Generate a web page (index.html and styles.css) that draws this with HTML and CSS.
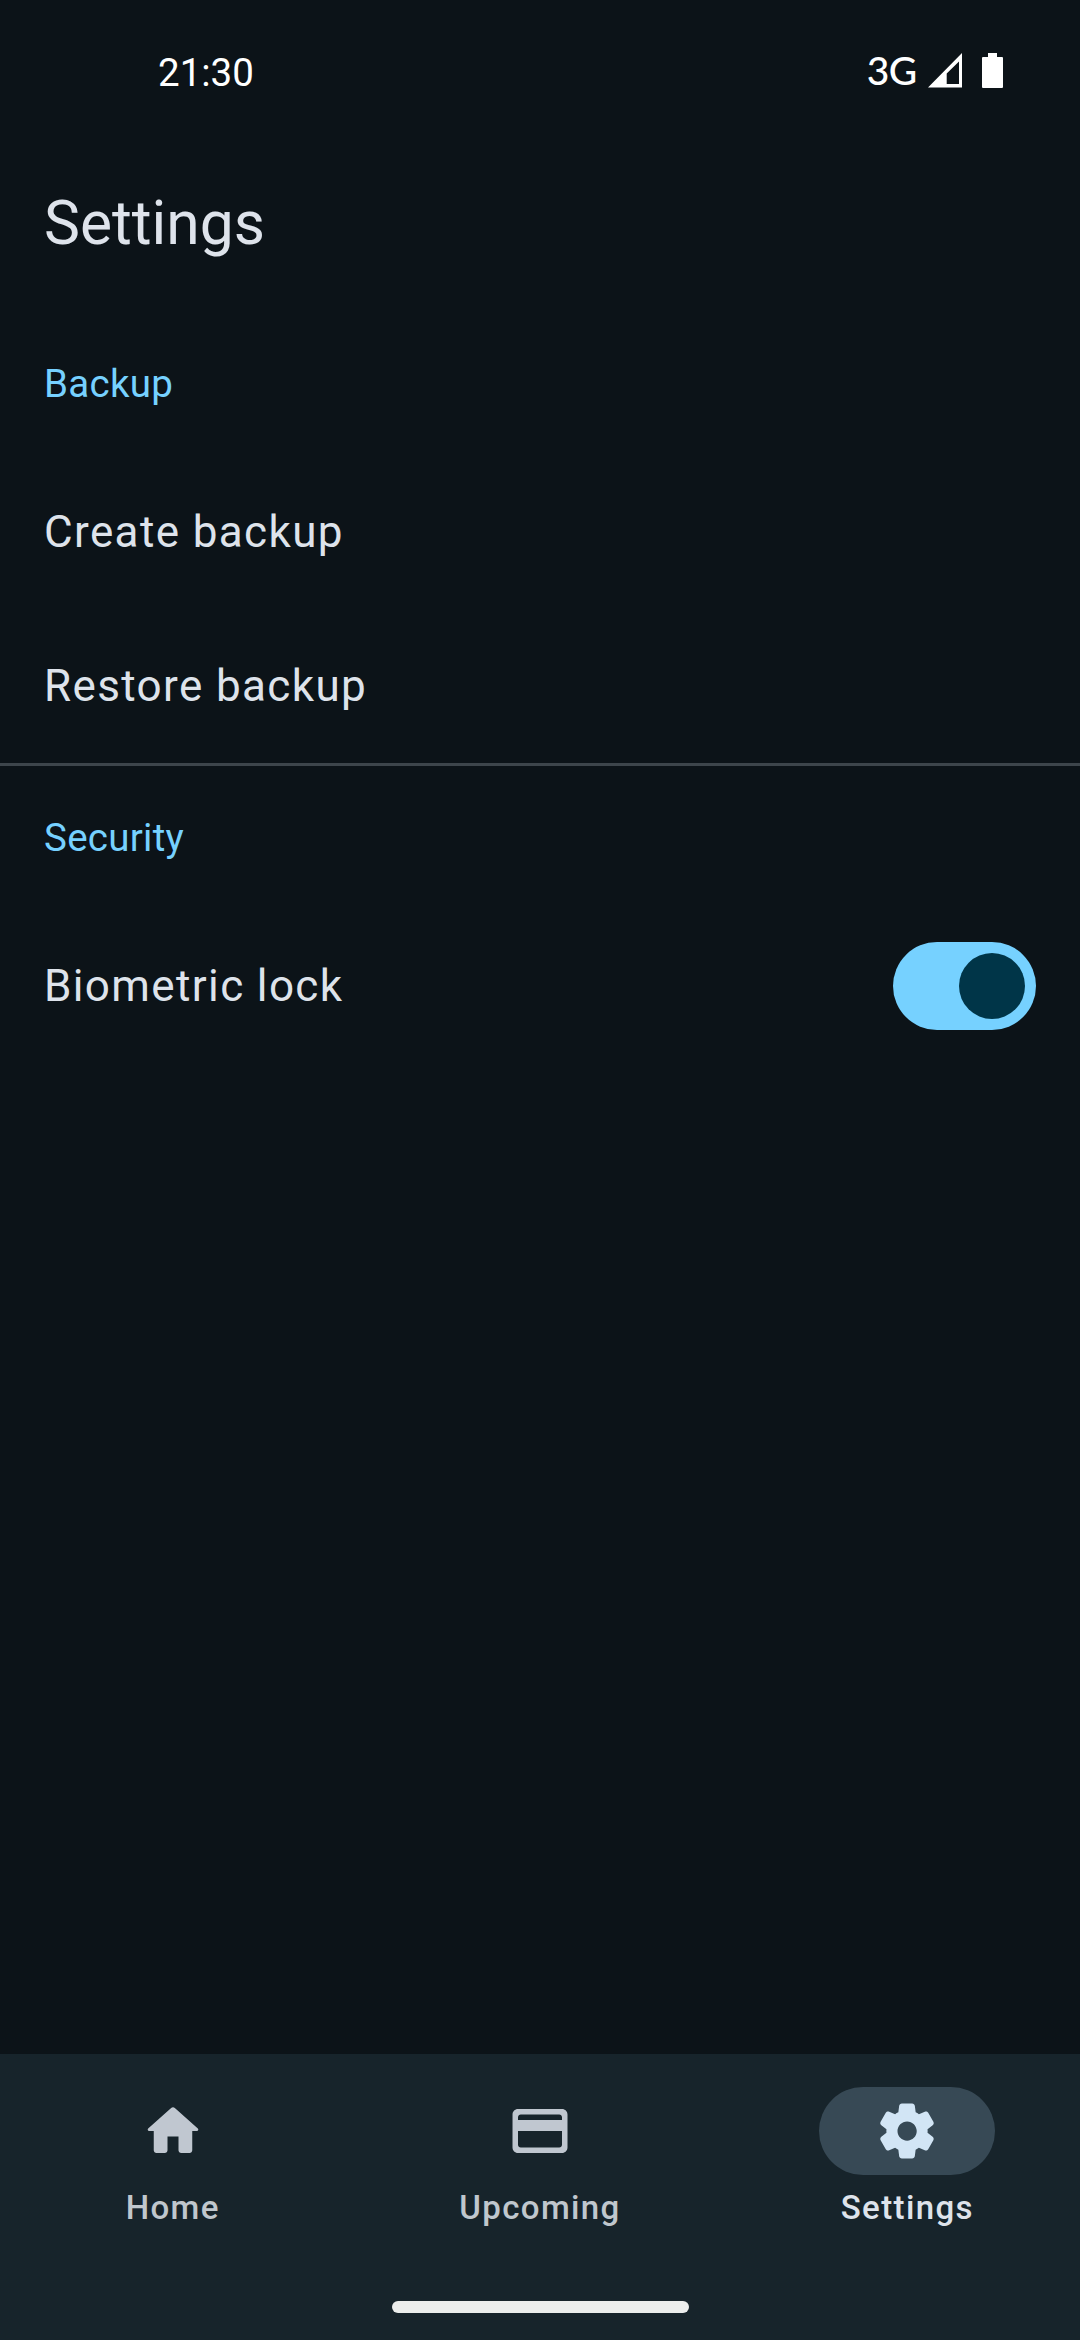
FILE: index.html
```html
<!DOCTYPE html>
<html lang="en">
<head>
<meta charset="utf-8">
<title>Settings</title>
<link rel="stylesheet" href="styles.css">
</head>
<body>
<div class="screen">
  <div class="status-bar">
    <span class="clock">21:30</span>
    <div class="status-icons">
      <span class="network">3G</span>
      <svg class="signal" width="34" height="35" viewBox="0 0 34 35"><path fill="#fff" fill-rule="evenodd" d="M34 0V34.5H0ZM31 8.5L18.7 20.5V31H31Z"/></svg>
      <svg class="battery" width="21" height="35" viewBox="0 0 21 35"><path fill="#fff" d="M6 0H15V4H20Q21 4 21 5V34Q21 35 20 35H1Q0 35 0 34V5Q0 4 1 4H6Z"/></svg>
    </div>
  </div>
  <header class="top-bar"><h1 class="title">Settings</h1></header>
  <main class="content">
    <section class="group group-divided">
      <h2 class="group-title">Backup</h2>
      <div class="row"><span class="row-label">Create backup</span></div>
      <div class="row"><span class="row-label">Restore backup</span></div>
    </section>
    <section class="group">
      <h2 class="group-title">Security</h2>
      <div class="row">
        <span class="row-label">Biometric lock</span>
        <div class="switch" role="switch" aria-checked="true"><div class="thumb"></div></div>
      </div>
    </section>
  </main>
  <nav class="nav">
    <div class="nav-items">
      <div class="nav-item">
        <div class="pill"><svg class="icon" viewBox="0 0 24 24"><path d="M10 19v-5h4v5c0 .55.45 1 1 1h3c.55 0 1-.45 1-1v-7h1.7c.46 0 .68-.57.33-.87L12.67 3.6c-.38-.34-.96-.34-1.34 0l-8.36 7.53c-.34.3-.13.87.33.87H5v7c0 .55.45 1 1 1h3c.55 0 1-.45 1-1z"/></svg></div>
        <span class="nav-label">Home</span>
      </div>
      <div class="nav-item">
        <div class="pill"><svg class="icon" viewBox="0 0 24 24"><path d="M20 4H4c-1.11 0-1.99.89-1.99 2L2 18c0 1.11.89 2 2 2h16c1.11 0 2-.89 2-2V6c0-1.11-.89-2-2-2zm-1 14H5c-.55 0-1-.45-1-1v-5h16v5c0 .55-.45 1-1 1zm1-10H4V7c0-.55.45-1 1-1h14c.55 0 1 .45 1 1z"/></svg></div>
        <span class="nav-label">Upcoming</span>
      </div>
      <div class="nav-item active">
        <div class="pill"><svg class="icon" viewBox="0 0 24 24"><path d="M19.5 12c0-.23-.01-.45-.03-.68l1.86-1.41c.4-.3.51-.86.26-1.3l-1.87-3.23c-.25-.44-.79-.62-1.25-.42l-2.15.91c-.37-.26-.76-.49-1.17-.68l-.29-2.31C14.8 2.38 14.37 2 13.87 2h-3.73c-.51 0-.94.38-1 .88l-.29 2.31c-.41.19-.8.42-1.17.68l-2.15-.91c-.46-.2-1-.02-1.25.42L2.41 8.62c-.25.44-.14.99.26 1.3l1.86 1.41c-.02.22-.03.44-.03.67s.01.45.03.68l-1.86 1.41c-.4.3-.51.86-.26 1.3l1.87 3.23c.25.44.79.62 1.25.42l2.15-.91c.37.26.76.49 1.17.68l.29 2.31c.06.5.49.88.99.88h3.73c.5 0 .93-.38.99-.88l.29-2.31c.41-.19.8-.42 1.17-.68l2.15.91c.46.2 1 .02 1.25-.42l1.87-3.23c.25-.44.14-.99-.26-1.3l-1.86-1.41c.03-.23.04-.45.04-.68zm-7.46 3.5c-1.93 0-3.5-1.57-3.5-3.5s1.57-3.5 3.5-3.5 3.5 1.57 3.5 3.5-1.57 3.5-3.5 3.5z"/></svg></div>
        <span class="nav-label">Settings</span>
      </div>
    </div>
    <div class="gesture-handle"></div>
  </nav>
</div>
</body>
</html>
```
FILE: styles.css
```css
* { box-sizing: border-box; }

body {
  margin: 0;
  background: #0c1318;
  font-family: Roboto, "Liberation Sans", sans-serif;
  color: #dee3eb;
}

.screen {
  display: flex;
  flex-direction: column;
  width: 1080px;
  height: 2340px;
  overflow: hidden;
}

.status-bar {
  display: flex;
  justify-content: space-between;
  height: 135px;
  padding: 53px 77px 0 158px;
  color: #fff;
}

.clock {
  font-size: 38.5px;
  line-height: 40px;
}

.status-icons {
  display: flex;
  align-items: flex-start;
}

.network {
  margin-right: 11px;
  font-family: Lato, sans-serif;
  font-size: 39px;
  font-weight: 500;
  line-height: 34px;
  letter-spacing: -0.7px;
}

.signal { margin-right: 20.5px; }

.top-bar {
  display: flex;
  align-items: center;
  height: 176px;
  padding: 0 44px;
}

.title {
  margin: 0;
  font-size: 60.5px;
  font-weight: 400;
  line-height: 77px;
}

.content { flex: 1; }

.group-divided { border-bottom: 3px solid #3d454b; }

.group-title {
  display: flex;
  align-items: center;
  height: 143px;
  margin: 0;
  padding: 0 44px;
  color: #76d1ff;
  font-size: 38.5px;
  font-weight: 400;
  letter-spacing: 0.275px;
}

.group-divided .group-title { height: 144px; }

.row {
  display: flex;
  align-items: center;
  justify-content: space-between;
  height: 154px;
  padding: 0 44px;
}

.row-label {
  font-size: 44px;
  letter-spacing: 1.375px;
}

.switch {
  display: flex;
  justify-content: flex-end;
  width: 143px;
  height: 88px;
  padding: 11px;
  border-radius: 44px;
  background: #76d1ff;
}

.thumb {
  width: 66px;
  height: 66px;
  border-radius: 50%;
  background: #003548;
}

.nav {
  display: flex;
  flex-direction: column;
  align-items: center;
  justify-content: space-between;
  height: 286px;
  padding: 33px 0 27px;
  background: #17242b;
}

.nav-items {
  display: grid;
  grid-template-columns: repeat(3, 1fr);
  column-gap: 22px;
  width: 100%;
}

.nav-item {
  display: flex;
  flex-direction: column;
  align-items: center;
  gap: 11px;
  color: #c0c7cd;
}

.pill {
  display: flex;
  align-items: center;
  justify-content: center;
  width: 176px;
  height: 88px;
  border-radius: 44px;
}

.icon {
  width: 66px;
  height: 66px;
  fill: #c0c7d0;
}

.nav-label {
  font-size: 33px;
  font-weight: 500;
  line-height: 44px;
  letter-spacing: 1.375px;
}

.active { color: #dee3eb; }
.active .pill { background: #374955; }
.active .icon { fill: #d2e5f5; }

.gesture-handle {
  width: 297px;
  height: 12px;
  border-radius: 6px;
  background: #eceeed;
}
```
